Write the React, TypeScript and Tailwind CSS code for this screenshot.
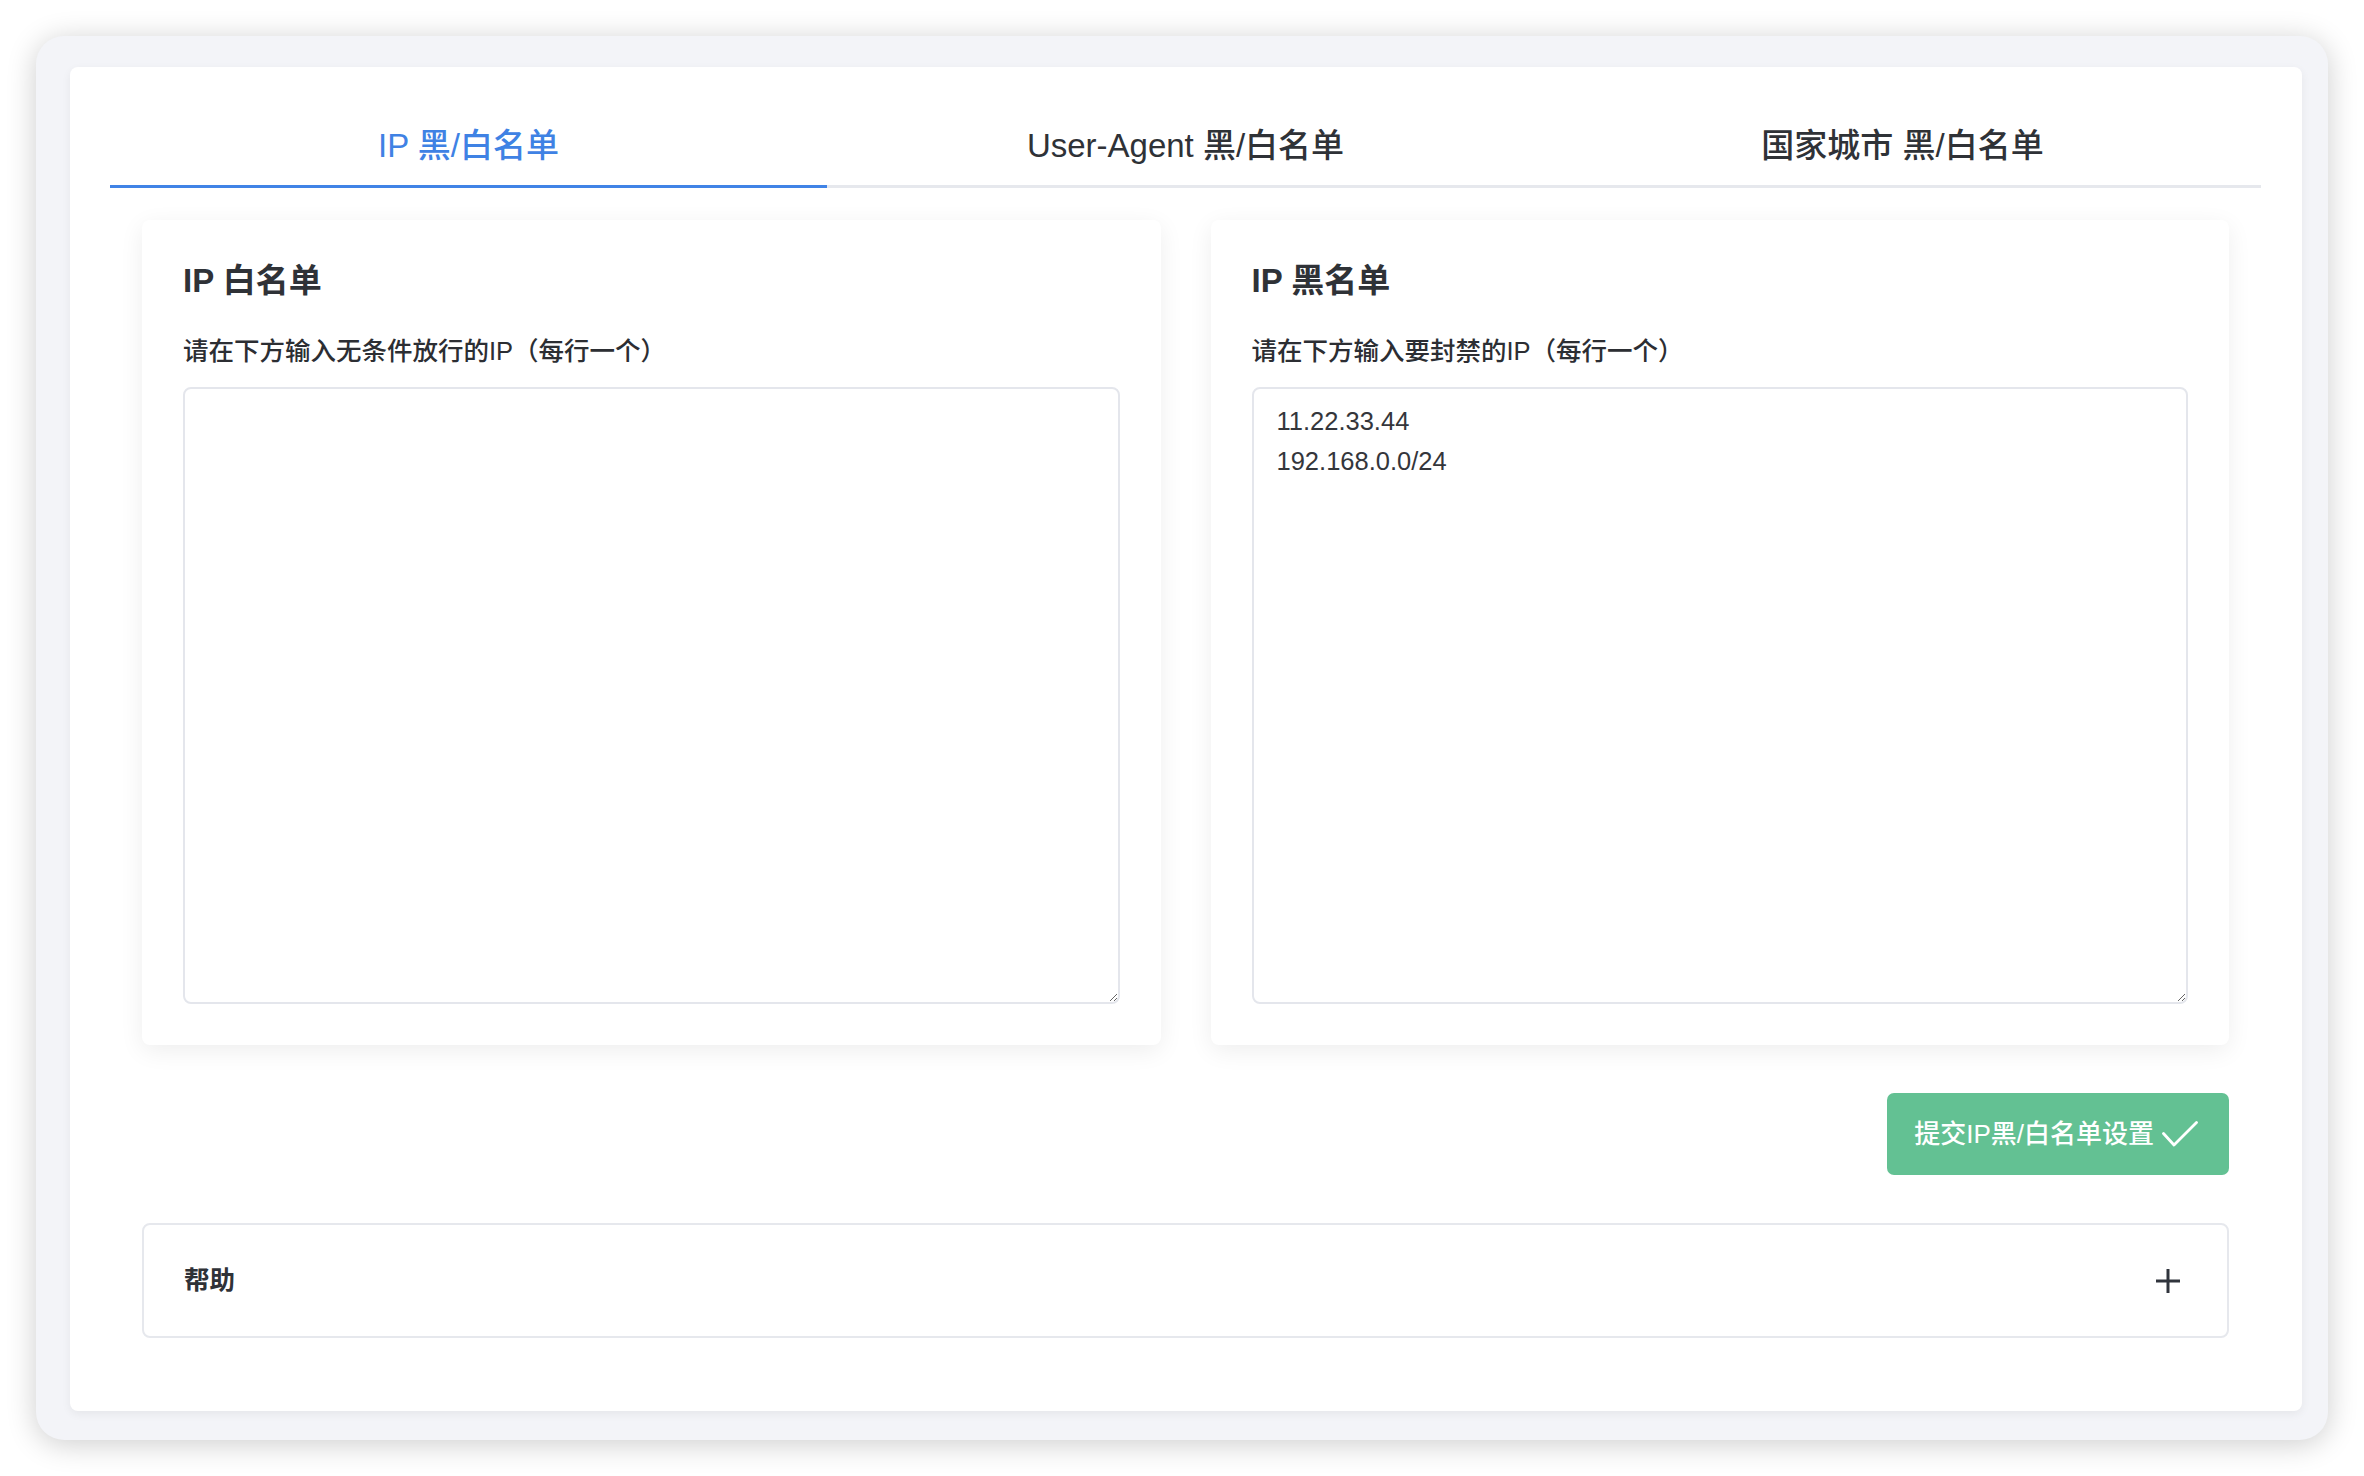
import { useState } from "react";

const tabs = ["IP 黑/白名单", "User-Agent 黑/白名单", "国家城市 黑/白名单"];

const ListCard = ({ title, label, value }: { title: string; label: string; value: string }) => {
  return (
    <div className="rounded-[8px] bg-white p-[41px] shadow-[0_6px_24px_rgba(0,0,0,0.07)]">
      <h3 className="text-[33px] font-semibold leading-[40px] text-[#2f3237]">{title}</h3>
      <p className="mt-[35px] text-[25.5px] font-medium leading-[30px] text-[#2c2e33]">{label}</p>
      <textarea
        defaultValue={value}
        className="mt-[21px] block h-[617px] w-full rounded-[8px] border-2 border-[#e4e6ec] px-[23px] py-[12px] text-[25.5px] leading-[40px] text-[#34363b] outline-none"
      />
    </div>
  );
};

export default function App() {
  const [active, setActive] = useState(0);

  return (
    <div
      className="h-[1476px] w-[2364px] bg-white pl-[36px] pt-[36px]"
      style={{ fontFamily: '"Liberation Sans", "Noto Sans CJK SC", sans-serif' }}
    >
      {/* window frame */}
      <div className="h-[1404px] w-[2292px] rounded-[28px] bg-[#f3f4f8] pb-[29px] pl-[34px] pr-[26px] pt-[31px] shadow-[0_4px_30px_rgba(0,0,0,0.2)]">
        <div className="h-[1344px] rounded-[8px] bg-white pb-[73px] pl-[40px] pr-[41px] pt-[40px] shadow-[0_3px_10px_rgba(0,0,0,0.06)]">
          {/* tabs */}
          <div className="grid grid-cols-3">
            {tabs.map((t, i) => (
              <button
                key={t}
                onClick={() => setActive(i)}
                className={
                  i === active
                    ? "flex h-[81px] items-center justify-center border-b-[3px] border-[#4083e6] text-[33px] font-medium text-[#3f82e4]"
                    : "flex h-[81px] items-center justify-center border-b-[3px] border-[#e6e8ed] text-[33px] font-medium text-[#2f3237]"
                }
              >
                {t}
              </button>
            ))}
          </div>

          <div className="px-[32px] pt-[32px]">
            <div className="grid grid-cols-2 gap-[50px]">
              <ListCard title="IP 白名单" label="请在下方输入无条件放行的IP（每行一个）" value="" />
              <ListCard title="IP 黑名单" label="请在下方输入要封禁的IP（每行一个）" value={"11.22.33.44\n192.168.0.0/24"} />
            </div>

            <div className="mt-[48px] flex justify-end">
              <button className="flex h-[82px] items-center gap-[8px] rounded-[7px] bg-[#63c193] pl-[27px] pr-[31px] text-[26px] font-medium text-white">
                提交IP黑/白名单设置
                <svg width="36" height="26" viewBox="0 0 36 26" fill="none">
                  <polyline points="1.5,12.5 12,24 34.5,1.5" stroke="white" strokeWidth="2.8" strokeLinecap="round" strokeLinejoin="round" />
                </svg>
              </button>
            </div>

            {/* help accordion */}
            <div className="mt-[48px] flex h-[115px] items-center justify-between rounded-[8px] border-2 border-[#e6e8ed] pl-[40px] pr-[47px]">
              <span className="text-[25.5px] font-semibold text-[#2f3237]">帮助</span>
              <svg width="24" height="26" viewBox="0 0 24 26" fill="none">
                <path d="M12 1v24M0 13h24" stroke="#30343c" strokeWidth="3" />
              </svg>
            </div>
          </div>
        </div>
      </div>
    </div>
  );
}
